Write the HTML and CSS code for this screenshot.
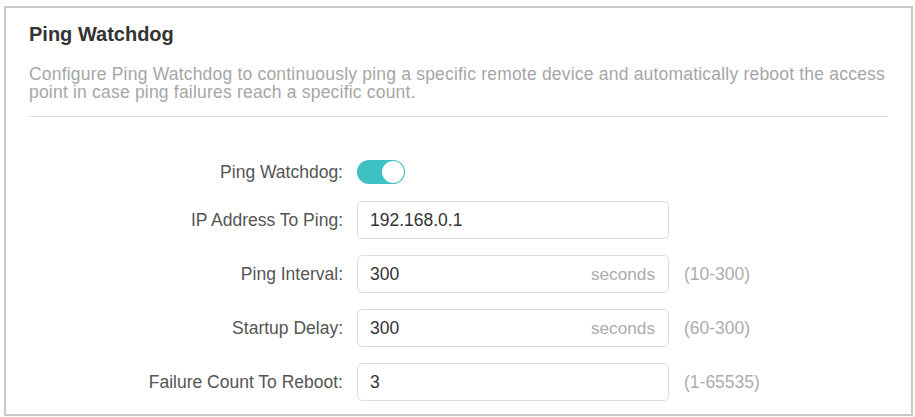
FILE: index.html
```html
<!DOCTYPE html>
<html>
<head>
<meta charset="utf-8">
<link rel="stylesheet" href="styles.css">
</head>
<body>
<div class="card">
  <h2 class="title">Ping Watchdog</h2>
  <p class="desc">Configure Ping Watchdog to continuously ping a specific remote device and automatically reboot the access point in case ping failures reach a specific count.</p>
  <div class="sep"></div>
  <div class="form">
    <div class="row row-toggle">
      <label class="label">Ping Watchdog:</label>
      <div class="toggle"><span class="knob"></span></div>
    </div>
    <div class="row">
      <label class="label">IP Address To Ping:</label>
      <div class="input"><span class="value">192.168.0.1</span></div>
    </div>
    <div class="row">
      <label class="label">Ping Interval:</label>
      <div class="input"><span class="value">300</span><span class="unit">seconds</span></div>
      <span class="range">(10-300)</span>
    </div>
    <div class="row">
      <label class="label">Startup Delay:</label>
      <div class="input"><span class="value">300</span><span class="unit">seconds</span></div>
      <span class="range">(60-300)</span>
    </div>
    <div class="row">
      <label class="label">Failure Count To Reboot:</label>
      <div class="input"><span class="value">3</span></div>
      <span class="range">(1-65535)</span>
    </div>
  </div>
</div>
</body>
</html>
```
FILE: styles.css
```css
html, body {
  margin: 0;
  padding: 0;
  background: #ffffff;
}
body {
  font-family: "Liberation Sans", Arial, sans-serif;
  padding: 6px 0 0 4px;
}
.card {
  border: 2px solid #c9c9c9;
  background: #fff;
  padding: 15px 23px 13px 23px;
  box-sizing: border-box;
  width: 909px;
}
.title {
  margin: 0;
  font-size: 20px;
  line-height: 23px;
  font-weight: bold;
  color: #333;
}
.desc {
  margin: 19px 0 0 0;
  font-size: 17.5px;
  letter-spacing: 0.2px;
  line-height: 18px;
  color: #a6a6a6;
  width: 862px;
}
.sep {
  margin-top: 15px;
  height: 1px;
  background: #dedede;
  width: 859px;
}
.form {
  display: flex;
  flex-direction: column;
  gap: 16px;
  margin-top: 42px;
}
.row {
  display: flex;
  align-items: center;
  height: 38px;
}
.row-toggle {
  height: 26px;
}
.label {
  width: 314px;
  text-align: right;
  font-size: 17.5px;
  color: #555;
  margin-right: 14px;
  flex: none;
}
.toggle {
  width: 48px;
  height: 24px;
  border-radius: 12px;
  background: #3ec1c3;
  display: flex;
  align-items: center;
  justify-content: flex-end;
  padding: 0 1px;
  box-sizing: border-box;
}
.knob {
  width: 22px;
  height: 22px;
  border-radius: 50%;
  background: #fff;
  box-shadow: 0 0 1px rgba(0,0,0,0.2);
}
.input {
  width: 312px;
  height: 38px;
  box-sizing: border-box;
  border: 1px solid #dcdcdc;
  border-radius: 5px;
  display: flex;
  align-items: center;
  padding: 0 13px 0 12px;
  flex: none;
}
.value {
  font-size: 17.5px;
  color: #333;
  flex: 1;
}
.unit {
  font-size: 17.2px;
  color: #ababab;
}
.range {
  margin-left: 15px;
  font-size: 17.5px;
  color: #adadad;
}
```
